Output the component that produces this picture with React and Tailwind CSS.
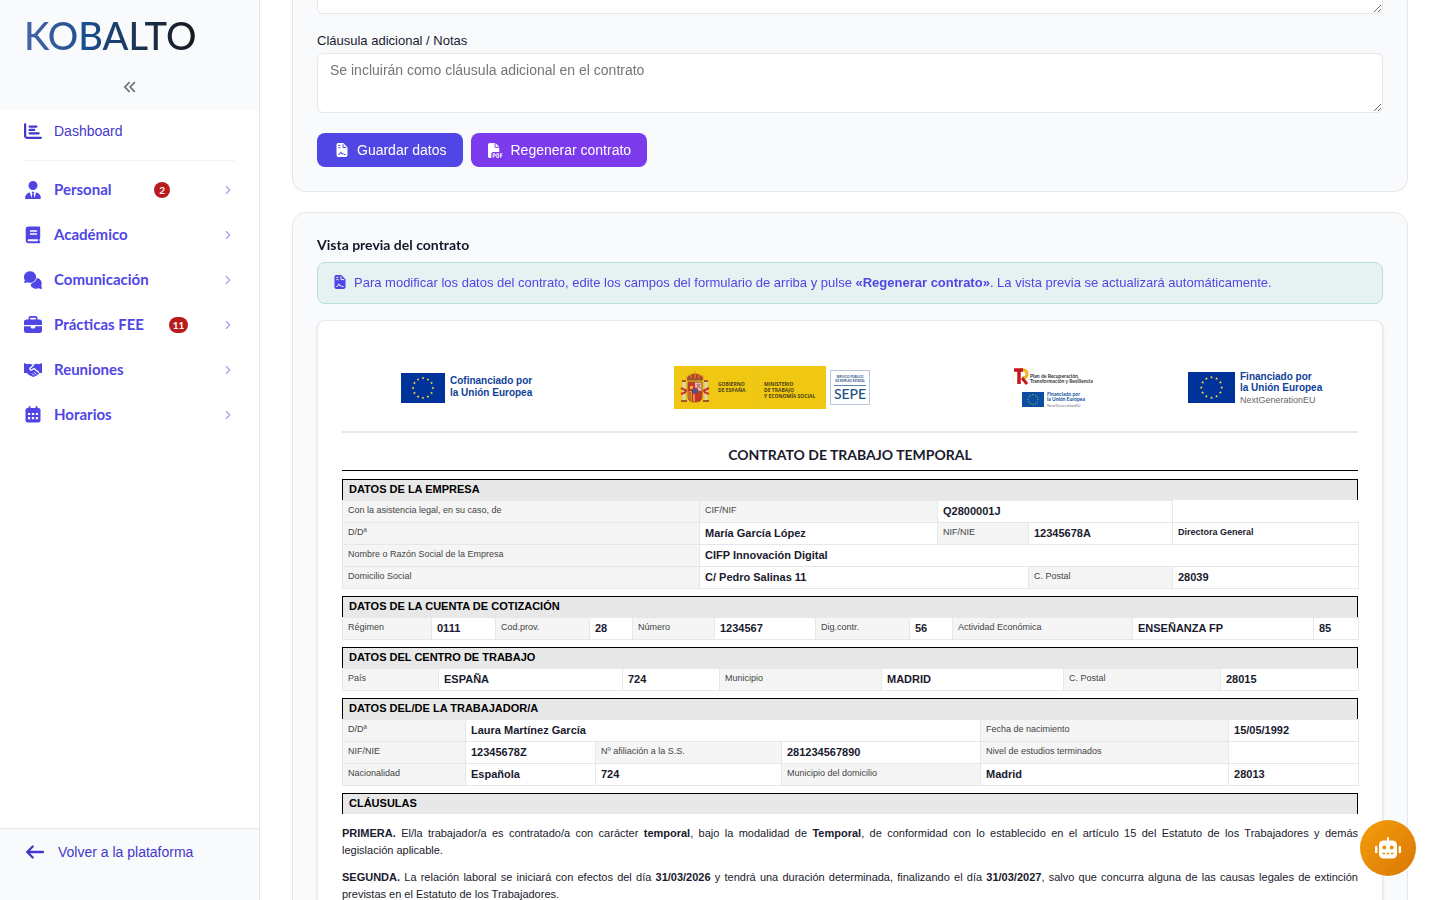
import React, { useState } from 'react';
import { FaAnglesLeft, FaBriefcase, FaChartBar, FaFilePdf, FaUserTie } from 'react-icons/fa6';
import { ChevronRight } from 'lucide-react';

const BookIcon = () => (
  <svg width="18" height="18" viewBox="0 0 18 18" aria-hidden="true">
    <path
      d="M4.500 0.500 H15 Q16.200 0.500 16.200 1.700 V12 Q16.200 12.800 15.500 13.200 V15.300 Q16.300 15.500 16.300 16.300 Q16.300 17.300 15.300 17.300 H4.500 Q1.700 17.300 1.700 14.500 V3.300 Q1.700 0.500 4.500 0.500 Z"
      fill="currentColor"
    />
    <path d="M6.500 5 H12.500 M6.500 8 H12.500" stroke="#ffffff" strokeWidth="1.400" strokeLinecap="round" />
    <path d="M4.600 14.300 H13.200" stroke="#ffffff" strokeWidth="1.900" strokeLinecap="round" />
  </svg>
);

const CommentsIcon = () => (
  <svg width="18" height="18" viewBox="0 0 18 18" aria-hidden="true">
    <path
      d="M12 7 A5.500 5.500 0 0 1 17.200 14.800 L18 17.200 Q18.100 18 17.300 17.900 L14.500 17.300 A6 5.500 0 0 1 6.500 14 Z"
      fill="currentColor"
    />
    <path
      d="M6.300 0.200 A6.100 5.800 0 1 1 3.600 11.300 L0.700 12 Q-0.200 12 0.100 11.200 L1 9.200 A6 5.800 0 0 1 6.300 0.200 Z"
      fill="currentColor"
      stroke="#ffffff"
      strokeWidth="1.400"
      paintOrder="stroke"
    />
  </svg>
);

const HandshakeIcon = () => (
  <svg width="18" height="18" viewBox="0 0 18 18" aria-hidden="true">
    <path
      d="M0 2 L3.200 3.200 L6 2.700 L9 3.900 L12 2.700 L14.800 3.200 L18 2 V12 L15.300 12 L13.300 14.300 L11.500 14.900 L9.500 15.900 L7.500 15.300 L5.500 14.300 L2.700 12 H0 Z"
      fill="currentColor"
    />
    <path
      d="M9.300 4.600 L5.900 7.300 Q5.700 9.400 7.700 9 L10 7.500 L14.500 11.300"
      fill="none"
      stroke="#ffffff"
      strokeWidth="1.300"
      strokeLinecap="round"
      strokeLinejoin="round"
    />
    <path d="M10.300 11.500 L12 13.200 M8.300 12.800 L9.700 14.200" stroke="#ffffff" strokeLinecap="round" />
  </svg>
);

const CalendarIcon = () => (
  <svg width="18" height="18" viewBox="0 0 18 18" aria-hidden="true">
    <path d="M5.500 1 V4 M12.500 1 V4" stroke="currentColor" strokeWidth="2" strokeLinecap="round" />
    <rect x="1.500" y="2" width="15" height="14.500" rx="2.200" fill="currentColor" />
    <path d="M4 8 H6.200 M7.900 8 H10.100 M11.800 8 H14 M4 12.200 H6.200 M7.900 12.200 H10.100 M11.800 12.200 H14" stroke="#ffffff" strokeWidth="2.200" />
  </svg>
);

const ContractIcon = ({ lines }) => (
  <svg width="12" height="14" viewBox="0 0 12 14" className="shrink-0" aria-hidden="true">
    <path d="M2 0 H7.300 L11.500 4.200 V12 Q11.500 14 9.500 14 H2.300 Q0.500 14 0.500 12 V1.800 Q0.500 0 2 0 Z" fill="currentColor" />
    <path
      d="M7 1.200 V4.600 H10.300 M2.300 2.400 H4.500 M2.300 4.700 H4.500 M2.300 11.500 L3.400 11.300 L4.800 8.800 L6 11.200 L7.300 10.500 L8 11.500 H9.700"
      stroke={lines}
      fill="none"
    />
  </svg>
);

const ArrowLeftIcon = () => (
  <svg width="22" height="18" viewBox="0 0 22 18" aria-hidden="true">
    <path d="M19 9 H3.500 M8.700 3.500 L3.200 9 L8.700 14.500" fill="none" stroke="currentColor" strokeWidth="2.300" strokeLinecap="round" strokeLinejoin="round" />
  </svg>
);

const RobotIcon = () => (
  <svg width="26" height="22" viewBox="0 0 26 22" aria-hidden="true">
    <path d="M13 1 V5" stroke="#ffffff" strokeWidth="2" strokeLinecap="round" />
    <rect x="4" y="3.500" width="18" height="18" rx="4.500" fill="#ffffff" />
    <path d="M1.200 10 V15 M24.800 10 V15" stroke="#ffffff" strokeWidth="2.400" strokeLinecap="round" />
    <circle cx="9.300" cy="10.500" r="1.900" fill="#e88e09" />
    <circle cx="16.700" cy="10.500" r="1.900" fill="#e88e09" />
    <path d="M7.500 16.500 H10 M11.700 16.500 H14.300 M16 16.500 H18.500" stroke="#e88e09" strokeWidth="1.700" />
  </svg>
);

const navItems = [
  { label: 'Personal', icon: FaUserTie, badge: 2 },
  { label: 'Académico', icon: BookIcon },
  { label: 'Comunicación', icon: CommentsIcon },
  { label: 'Prácticas FEE', icon: FaBriefcase, badge: 11 },
  { label: 'Reuniones', icon: HandshakeIcon },
  { label: 'Horarios', icon: CalendarIcon }
];

// Cell kinds: l = label, v = value, s = small value, n = no cell borders
const sections = [
  {
    title: 'DATOS DE LA EMPRESA',
    cols: [357, 238, 91, 144, 186],
    rows: [
      [['l', 'Con la asistencia legal, en su caso, de'], ['l', 'CIF/NIF'], ['v', 'Q2800001J', 2], ['n', '']],
      [['l', 'D/Dª'], ['v', 'María García López'], ['l', 'NIF/NIE'], ['v', '12345678A'], ['s', 'Directora General']],
      [['l', 'Nombre o Razón Social de la Empresa'], ['v', 'CIFP Innovación Digital', 4]],
      [['l', 'Domicilio Social'], ['v', 'C/ Pedro Salinas 11', 2], ['l', 'C. Postal'], ['v', '28039']]
    ]
  },
  {
    title: 'DATOS DE LA CUENTA DE COTIZACIÓN',
    cols: [89, 64, 94, 43, 82, 101, 94, 43, 180, 181, 45],
    rows: [
      [
        ['l', 'Régimen'], ['v', '0111'], ['l', 'Cod.prov.'], ['v', '28'], ['l', 'Número'], ['v', '1234567'],
        ['l', 'Dig.contr.'], ['v', '56'], ['l', 'Actividad Económica'], ['v', 'ENSEÑANZA FP'], ['v', '85']
      ]
    ]
  },
  {
    title: 'DATOS DEL CENTRO DE TRABAJO',
    cols: [96, 184, 97, 162, 182, 157, 138],
    rows: [
      [['l', 'País'], ['v', 'ESPAÑA'], ['v', '724'], ['l', 'Municipio'], ['v', 'MADRID'], ['l', 'C. Postal'], ['v', '28015']]
    ]
  },
  {
    title: 'DATOS DEL/DE LA TRABAJADOR/A',
    cols: [123, 130, 186, 199, 248, 130],
    rows: [
      [['l', 'D/Dª'], ['v', 'Laura Martínez García', 3], ['l', 'Fecha de nacimiento'], ['v', '15/05/1992']],
      [['l', 'NIF/NIE'], ['v', '12345678Z'], ['l', 'Nº afiliación a la S.S.'], ['v', '281234567890'], ['l', 'Nivel de estudios terminados'], ['v', '']],
      [['l', 'Nacionalidad'], ['v', 'Española'], ['v', '724'], ['l', 'Municipio del domicilio'], ['v', 'Madrid'], ['v', '28013']]
    ]
  }
];

const cellStyles = {
  l: 'border border-[#e5e7eb] bg-[#f5f5f5] text-[9px] leading-[15px] text-[#444444]',
  v: 'border border-[#e5e7eb] text-[11px] leading-[17px] font-bold text-[#1a1a2e]',
  s: 'border border-[#e5e7eb] text-[9px] leading-[15px] font-bold text-[#1a1a2e]',
  n: ''
};

const SectionTitle = ({ children }) => (
  <h4 className="h-[21px] border border-b-0 border-black bg-[#e8e8e8] px-[6px] text-[11px] leading-[19px] font-bold text-black">
    {children}
  </h4>
);

const DataSection = ({ section }) => (
  <section className="mb-[7px]">
    <SectionTitle>{section.title}</SectionTitle>
    <table className="w-full table-fixed border-collapse" aria-label={section.title}>
      <colgroup>
        {section.cols.map((width, i) => (
          <col key={i} style={{ width }} />
        ))}
      </colgroup>
      <tbody>
        {section.rows.map((row, i) => (
          <tr key={i} className="h-[22px]">
            {row.map(([kind, text, span], j) => (
              <td key={j} colSpan={span || 1} className={`px-[5px] py-[2px] align-top whitespace-nowrap ${cellStyles[kind]}`}>
                {text}
              </td>
            ))}
          </tr>
        ))}
      </tbody>
    </table>
  </section>
);

const EuFlag = ({ x, y, width, height, fill = '#003399' }) => {
  const r = height * 0.33;
  const size = height * 0.045;
  return (
    <g>
      <rect x={x} y={y} width={width} height={height} fill={fill} />
      {Array.from({ length: 12 }, (_, i) => {
        const a = (i * Math.PI) / 6;
        const cx = x + width / 2 + r * Math.sin(a);
        const cy = y + height / 2 - r * Math.cos(a);
        const points = Array.from({ length: 10 }, (_, k) => {
          const d = k % 2 ? size * 0.5 : size * 1.1;
          const b = (k * Math.PI) / 5;
          return `${cx + d * Math.sin(b)},${cy - d * Math.cos(b)}`;
        }).join(' ');
        return <polygon key={i} points={points} fill="#ffdd33" />;
      })}
    </g>
  );
};

const CofinancedLogo = () => (
  <svg width="134" height="44" viewBox="0 0 134 44" role="img" aria-label="Cofinanciado por la Unión Europea">
    <EuFlag x={1} y={7} width={44} height={30} />
    <g fill="#0f3f99" fontFamily="Liberation Sans, Arial, sans-serif" fontWeight="700" fontSize="10">
      <text x="50" y="18">Cofinanciado por</text>
      <text x="50" y="30">la Unión Europea</text>
    </g>
  </svg>
);

const CoatOfArms = () => (
  <g>
    {/* Crown */}
    <path d="M14 13 Q14 8 22 7.500 Q30 8 30 13 Z" fill="#b5402c" />
    <path d="M13 13 Q13 9 17 9 M31 13 Q31 9 27 9 M22 5 V13 M18 8 V13 M26 8 V13" stroke="#d99a2b" fill="none" />
    <rect x="14" y="12.500" width="16" height="2" fill="#9c4f2a" />
    {/* Pillars of Hercules */}
    <path d="M11 16 V34 M33 16 V34" stroke="#d8d6d0" strokeWidth="2.500" />
    <path d="M9 15 H13 M31 15 H35 M8 35 H14 M30 35 H36" stroke="#a5562f" strokeWidth="2" />
    <path d="M8 22 L14 25 M8 28 L13 26 M36 22 L30 25 M36 28 L31 26" stroke="#c8352b" strokeWidth="2" />
    {/* Quartered shield */}
    <path d="M15 16 H22 V25 H15 Z" fill="#c8352b" />
    <path d="M22 16 H29 V25 H22 Z" fill="#e3b7a0" />
    <path d="M15 25 H22 V36 Q15 36 15 31 Z" fill="#e0932b" />
    <path d="M22 25 H29 V31 Q29 36 22 36 Z" fill="#c8352b" />
    <path d="M17 20 H20 V23 H17 Z" fill="#e8b93c" />
    <path d="M24 18 L27 22 M27 18 L24 22" stroke="#b04a66" />
    <path d="M17 26 V34 M19.500 26 V35" stroke="#b8332a" />
    <path d="M15 16 H29 V31 Q29 36 22 36 Q15 36 15 31 Z" fill="none" stroke="#96562f" />
    <circle cx="22" cy="25" r="3" fill="#3a5a9c" stroke="#b8332a" />
  </g>
);

const MinistryLogo = () => (
  <svg width="198" height="44" viewBox="0 0 198 44" role="img" aria-label="Gobierno de España, Ministerio de Trabajo y Economía Social, SEPE">
    <rect x="1" y="0" width="152" height="43" fill="#f0c814" />
    <path d="M84.500 1 V42" stroke="#e9c217" />
    <CoatOfArms />
    <g fill="#4a4013" fontFamily="Open Sans, sans-serif" fontWeight="700" fontSize="5">
      <text x="45" y="20">GOBIERNO</text>
      <text x="45" y="26">DE ESPAÑA</text>
      <text x="91" y="20">MINISTERIO</text>
      <text x="91" y="26">DE TRABAJO</text>
      <text x="91" y="32">Y ECONOMÍA SOCIAL</text>
    </g>
    <rect x="157.500" y="4.500" width="39" height="34" fill="#ffffff" stroke="#b9c6d9" />
    <g fill="#1f4f86" fontFamily="Lato, sans-serif" textAnchor="middle">
      <text x="177" y="12" fontSize="3" fontWeight="700">SERVICIO PÚBLICO</text>
      <text x="177" y="16" fontSize="3" fontWeight="700">DE EMPLEO ESTATAL</text>
      <path d="M161 19.500 H193" stroke="#5c86b5" />
      <text x="177" y="33" fontSize="14" fontWeight="500">SEPE</text>
    </g>
  </svg>
);

const RecoveryPlanLogo = () => (
  <svg width="86" height="44" viewBox="0 0 86 44" role="img" aria-label="Plan de Recuperación, Transformación y Resiliencia">
    <g fill="none">
      <path d="M9 4 H12 Q16 4 16 8 Q16 12 11 12" stroke="#f0b41c" strokeWidth="3" />
      <path d="M3 4 H12 M8 4 V18" stroke="#c4161c" strokeWidth="3.500" />
      <path d="M11 12 L16 18" stroke="#c4161c" strokeWidth="3" />
      <path d="M3 7 Q0 12 4 17" stroke="#f3d25c" strokeDasharray="1 1.500" />
    </g>
    <g fill="#333333" fontFamily="Lato, sans-serif" fontWeight="700" fontSize="5">
      <text x="19" y="12">Plan de Recuperación,</text>
      <text x="19" y="17">Transformación y Resiliencia</text>
    </g>
    <EuFlag x={11} y={26} width={22} height={15} fill="#0b4ea2" />
    <g fontFamily="Lato, sans-serif" fontSize="5">
      <text x="36" y="30" fill="#0b4ea2" fontWeight="700">Financiado por</text>
      <text x="36" y="35" fill="#0b4ea2" fontWeight="700">la Unión Europea</text>
      <text x="36" y="41" fill="#777777" fontSize="4">NextGenerationEU</text>
    </g>
  </svg>
);

const NextGenLogo = () => (
  <svg width="138" height="44" viewBox="0 0 138 44" role="img" aria-label="Financiado por la Unión Europea, NextGenerationEU">
    <EuFlag x={0} y={6} width={47} height={31} />
    <g fontFamily="Liberation Sans, Arial, sans-serif" fontSize="10">
      <text x="52" y="14" fill="#0f3f99" fontWeight="700">Financiado por</text>
      <text x="52" y="25" fill="#0f3f99" fontWeight="700">la Unión Europea</text>
      <text x="52" y="37" fill="#666666" fontSize="9">NextGenerationEU</text>
    </g>
  </svg>
);

const Sidebar = () => (
  <aside className="flex h-full w-[260px] shrink-0 flex-col border-r border-[#e5e7eb] bg-white">
    <div className="flex h-[110px] flex-col bg-[#f9fafc] px-6 pt-[15px]">
      <a
        href="#inicio"
        className="self-start bg-linear-to-r from-[#4a63a8] via-[#17508f] via-35% to-[#15171c] bg-clip-text font-['URW_Gothic','Century_Gothic',Lato,sans-serif] text-[38px] leading-10 font-medium text-transparent"
      >
        KOBALTO
      </a>
      <button type="button" aria-label="Contraer menú" className="mt-[25px] self-center text-[#6b7280]">
        <FaAnglesLeft size={14} />
      </button>
    </div>

    <nav className="flex-1 px-6">
      <a href="#dashboard" className="flex h-[42px] items-center gap-3 text-[14px] text-[#4338ca]">
        <FaChartBar size={18} />
        Dashboard
      </a>
      <hr className="mt-2 mb-[6px] border-[#f1f2f5]" />
      {navItems.map(({ label, icon: Icon, badge }) => (
        <button
          key={label}
          type="button"
          className="flex h-[45px] w-full items-center justify-between font-['URW_Gothic','Century_Gothic',Lato,sans-serif] text-[15px] font-bold text-[#4f46e5]"
        >
          <span className="flex items-center gap-3">
            <Icon size={18} />
            {label}
          </span>
          {badge && (
            <span className="h-4 min-w-4 rounded-full bg-[#b91c1c] px-1 text-center text-[10px] leading-4 text-white">{badge}</span>
          )}
          <ChevronRight size={14} strokeWidth={2} className="ml-2 text-[#a5a0ee]" />
        </button>
      ))}
    </nav>

    <div className="h-[72px] border-t border-[#e5e7eb] bg-[#f9fafc] px-6 pt-[11px]">
      <a href="#plataforma" className="flex items-center gap-3 text-[14px] leading-6 text-[#4338ca]">
        <ArrowLeftIcon />
        Volver a la plataforma
      </a>
    </div>
  </aside>
);

const App = () => {
  const [observations, setObservations] = useState('');
  const [notes, setNotes] = useState('');

  return (
    <div className="flex h-screen overflow-hidden bg-white font-['Liberation_Sans',Arial,sans-serif]">
      <Sidebar />

      <main className="min-w-0 flex-1 overflow-y-auto px-8 [scrollbar-width:none]">
        {/* Contract form */}
        <form
          onSubmit={(e) => e.preventDefault()}
          className="mb-5 rounded-b-[14px] border border-t-0 border-[#e5e7eb] bg-[#f9fafc] px-6 pb-6"
        >
          <textarea
            aria-label="Observaciones"
            value={observations}
            onChange={(e) => setObservations(e.target.value)}
            className="block h-[14px] w-full rounded-b-md border border-t-0 border-[#e5e7eb] bg-white"
          />
          <label htmlFor="notes" className="mt-4 mb-[2px] block text-[13px] leading-[21px] text-[#1a1a2e]">
            Cláusula adicional / Notas
          </label>
          <textarea
            id="notes"
            value={notes}
            onChange={(e) => setNotes(e.target.value)}
            placeholder="Se incluirán como cláusula adicional en el contrato"
            className="block h-[60px] w-full rounded-md border border-[#e5e7eb] bg-white px-3 py-2 text-[14px] leading-4 placeholder:text-[#757575]"
          />
          <div className="mt-5 flex gap-2">
            <button type="submit" className="flex h-[34px] items-center gap-[6px] rounded-lg bg-[#4f46e5] px-4 text-[14px] text-white">
              <span className="flex w-[18px] justify-center">
                <ContractIcon lines="#4f46e5" />
              </span>
              Guardar datos
            </button>
            <button type="button" className="flex h-[34px] items-center gap-[6px] rounded-lg bg-[#7c3aed] px-4 text-[14px] text-white">
              <span className="flex w-[18px] justify-center">
                <FaFilePdf size={15} />
              </span>
              Regenerar contrato
            </button>
          </div>
        </form>

        {/* Preview */}
        <section className="rounded-[14px] border border-[#e5e7eb] bg-[#f9fafc] p-6">
          <h2 className="mb-[9px] font-['URW_Gothic','Century_Gothic',Lato,sans-serif] text-[14px] leading-4 font-bold text-[#111827]">
            Vista previa del contrato
          </h2>
          <div className="mb-4 flex h-[42px] items-center gap-2 rounded-lg border border-[#b9dfd7] bg-[#e6f2f1] px-4 text-[13px] text-[#4f46e5]">
            <span className="mb-[2px]">
              <ContractIcon lines="#e6f2f1" />
            </span>
            <p>
              Para modificar los datos del contrato, edite los campos del formulario de arriba y pulse{' '}
              <strong>«Regenerar contrato»</strong>. La vista previa se actualizará automáticamente.
            </p>
          </div>

          <article className="rounded-lg border border-[#e5e7eb] bg-white p-6 shadow-sm">
            <header className="grid h-[88px] grid-cols-[250fr_360fr_204fr_202fr] items-center justify-items-center border-b-2 border-[#e5e7eb]">
              <CofinancedLogo />
              <MinistryLogo />
              <RecoveryPlanLogo />
              <NextGenLogo />
            </header>

            <h3 className="mt-3 mb-2 border-b border-black pb-[5px] text-center font-['URW_Gothic','Century_Gothic',Lato,sans-serif] text-[14px] leading-5 font-bold text-[#1a1a2e]">
              CONTRATO DE TRABAJO TEMPORAL
            </h3>

            {sections.map((section) => (
              <DataSection key={section.title} section={section} />
            ))}

            <SectionTitle>CLÁUSULAS</SectionTitle>
            <div className="mt-[11px] space-y-[10px] text-justify text-[11px] leading-[17px] text-[#1a1a2e]">
              <p>
                <strong>PRIMERA.</strong> El/la trabajador/a es contratado/a con carácter <strong>temporal</strong>, bajo la
                modalidad de <strong>Temporal</strong>, de conformidad con lo establecido en el artículo 15 del Estatuto de los
                Trabajadores y demás legislación&nbsp;aplicable.
              </p>
              <p>
                <strong>SEGUNDA.</strong> La relación laboral se iniciará con efectos del día <strong>31/03/2026</strong> y
                tendrá una duración determinada, finalizando el día <strong>31/03/2027</strong>, salvo que concurra alguna de
                las causas legales de extinción previstas en el Estatuto de los Trabajadores.
              </p>
            </div>
          </article>
        </section>
      </main>

      {/* Assistant */}
      <button
        type="button"
        aria-label="Abrir asistente"
        className="fixed right-6 bottom-6 flex size-14 items-center justify-center rounded-full bg-linear-to-br from-[#f59e0b] to-[#d97706] text-white"
      >
        <RobotIcon />
      </button>
    </div>
  );
};

export default App;
